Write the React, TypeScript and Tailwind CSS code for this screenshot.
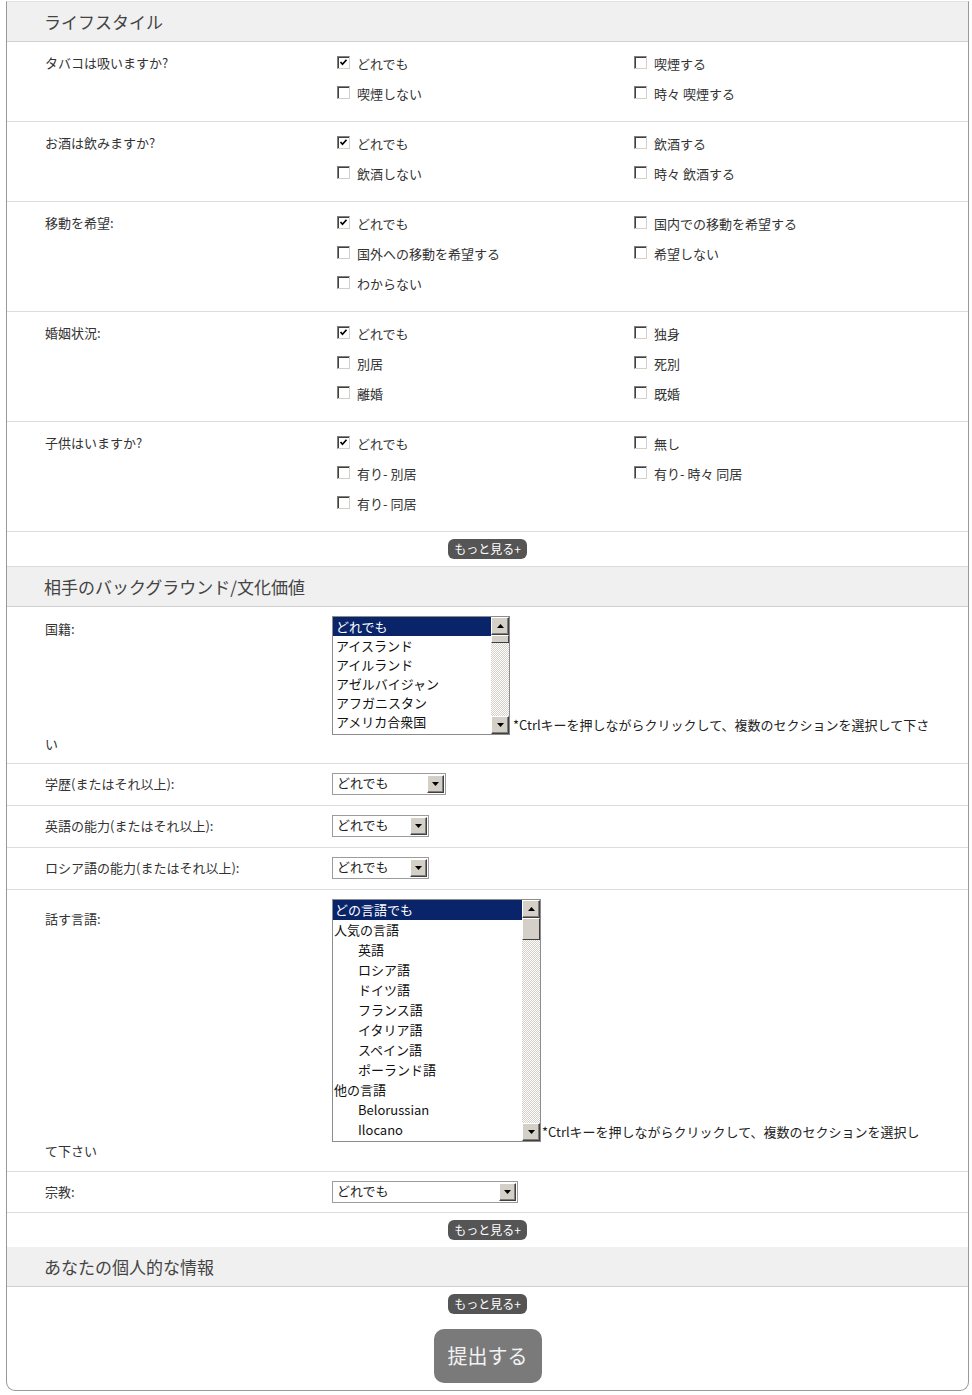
import React from "react";

const FONT = "font-['Noto_Sans_CJK_JP','Noto_Sans',sans-serif]";

function Check({ checked }: { checked?: boolean }) {
  return (
    <span className="mt-[2px] flex h-[13px] w-[13px] shrink-0 items-center justify-center border border-t-[#808080] border-l-[#808080] border-r-[#d4d0c8] border-b-[#d4d0c8] bg-white shadow-[inset_1px_1px_0_#404040]">
      {checked && (
        <svg width="9" height="9" viewBox="0 0 9 9">
          <path d="M1.5 4 L3.5 6.2 L7.5 1.8" fill="none" stroke="#000" strokeWidth="1.7" />
        </svg>
      )}
    </span>
  );
}

function Opt({ label, checked }: { label: string; checked?: boolean }) {
  return (
    <div className="flex h-[30px] items-start gap-[7px]">
      <Check checked={checked} />
      <span className="pt-[1px] leading-[18px] text-[13px] text-[#333]">{label}</span>
    </div>
  );
}

function Header({ title }: { title: string }) {
  return (
    <div className="flex h-[40px] items-center border-b border-[#d0d0d0] bg-[#f0f0f0] pl-[37px] text-[17px] text-[#444]">
      {title}
    </div>
  );
}

function CheckRow({
  label,
  left,
  right,
}: {
  label: string;
  left: { l: string; c?: boolean }[];
  right: { l: string; c?: boolean }[];
}) {
  return (
    <div className="flex border-b border-[#dcdcdc] pb-[7px] pl-[38px] pt-[12px]">
      <div className="w-[292px] text-[13px] leading-[18px] text-[#333]">{label}</div>
      <div className="w-[297px]">
        {left.map((o) => (
          <Opt key={o.l} label={o.l} checked={o.c} />
        ))}
      </div>
      <div>
        {right.map((o) => (
          <Opt key={o.l} label={o.l} checked={o.c} />
        ))}
      </div>
    </div>
  );
}

function Arrow({ up }: { up?: boolean }) {
  return (
    <svg width="7" height="4" viewBox="0 0 7 4">
      {up ? <path d="M3.5 0 L7 4 L0 4 Z" fill="#000" /> : <path d="M0 0 L7 0 L3.5 4 Z" fill="#000" />}
    </svg>
  );
}

function SBtn({ up, h }: { up?: boolean; h: string }) {
  return (
    <div
      className={`flex ${h} w-full items-center justify-center border border-t-white border-l-white border-r-[#404040] border-b-[#404040] bg-[#d4d0c8] shadow-[inset_-1px_-1px_0_#808080]`}
    >
      <Arrow up={up} />
    </div>
  );
}

function MoreBtn() {
  return (
    <div className="flex justify-center py-[7px]">
      <div className="flex h-[20px] w-[79px] items-center justify-center rounded-[6px] bg-[#555] text-[12px] text-white">
        もっと見る+
      </div>
    </div>
  );
}

function Select({ w, value }: { w: string; value: string }) {
  return (
    <div className={`flex h-[22px] ${w} items-stretch border border-[#9c9c9c] bg-white`}>
      <div className="flex-1 pl-[4px] text-[13px] leading-[18px] text-[#222]">{value}</div>
      <div className="m-[1px] w-[17px]">
        <SBtn h="h-full" />
      </div>
    </div>
  );
}

function SelectRow({ label, w }: { label: string; w: string }) {
  return (
    <div className="flex items-center border-b border-[#dcdcdc] pb-[10px] pl-[38px] pt-[9px]">
      <div className="w-[287px] text-[13px] text-[#333]">{label}</div>
      <Select w={w} value="どれでも" />
    </div>
  );
}

export default function App() {
  const countries = ["アイスランド", "アイルランド", "アゼルバイジャン", "アフガニスタン", "アメリカ合衆国"];
  const langs: { t: string; i?: boolean }[] = [
    { t: "人気の言語" },
    { t: "英語", i: true },
    { t: "ロシア語", i: true },
    { t: "ドイツ語", i: true },
    { t: "フランス語", i: true },
    { t: "イタリア語", i: true },
    { t: "スペイン語", i: true },
    { t: "ポーランド語", i: true },
    { t: "他の言語" },
    { t: "Belorussian", i: true },
    { t: "Ilocano", i: true },
  ];
  const checker =
    "bg-[repeating-conic-gradient(#d4d0c8_0%_25%,#ffffff_0%_50%)] bg-[length:2px_2px]";

  return (
    <div className={`${FONT} bg-white pb-[4px]`}>
      <div className="ml-[6px] mt-[1px] w-[963px] overflow-hidden rounded-b-[9px] border-x border-b border-t border-[#999] border-t-[#e2e2e2]">
        <Header title="ライフスタイル" />
        <CheckRow
          label="タバコは吸いますか?"
          left={[{ l: "どれでも", c: true }, { l: "喫煙しない" }]}
          right={[{ l: "喫煙する" }, { l: "時々 喫煙する" }]}
        />
        <CheckRow
          label="お酒は飲みますか?"
          left={[{ l: "どれでも", c: true }, { l: "飲酒しない" }]}
          right={[{ l: "飲酒する" }, { l: "時々 飲酒する" }]}
        />
        <CheckRow
          label="移動を希望:"
          left={[{ l: "どれでも", c: true }, { l: "国外への移動を希望する" }, { l: "わからない" }]}
          right={[{ l: "国内での移動を希望する" }, { l: "希望しない" }]}
        />
        <CheckRow
          label="婚姻状況:"
          left={[{ l: "どれでも", c: true }, { l: "別居" }, { l: "離婚" }]}
          right={[{ l: "独身" }, { l: "死別" }, { l: "既婚" }]}
        />
        <CheckRow
          label="子供はいますか?"
          left={[{ l: "どれでも", c: true }, { l: "有り- 別居" }, { l: "有り- 同居" }]}
          right={[{ l: "無し" }, { l: "有り- 時々 同居" }]}
        />
        <div className="border-b border-[#dcdcdc]">
          <MoreBtn />
        </div>

        <Header title="相手のバックグラウンド/文化価値" />
        {/* nationality */}
        <div className="border-b border-[#dcdcdc] pb-[10px] pl-[38px] pt-[9px] text-[13px] text-[#333]">
          <div className="flex items-end">
            <div className="w-[287px] self-start pt-[3px]">国籍:</div>
            <div className="flex h-[119px] w-[178px] border border-[#8c8c8c] bg-white">
              <div className="flex-1 overflow-hidden">
                <div className="h-[19px] bg-[#0a246a] pl-[3px] leading-[19px] text-white">どれでも</div>
                {countries.map((c) => (
                  <div key={c} className="h-[19px] pl-[3px] leading-[19px] text-[#111]">
                    {c}
                  </div>
                ))}
              </div>
              <div className={`flex w-[18px] flex-col ${checker}`}>
                <SBtn up h="h-[18px]" />
                <div className="h-[8px] border border-t-white border-l-white border-r-[#404040] border-b-[#404040] bg-[#d4d0c8]" />
                <div className="flex-1" />
                <SBtn h="h-[18px]" />
              </div>
            </div>
            <span className="mb-[1px] whitespace-nowrap pl-[3px] leading-[18px] text-[#222]">
              *Ctrlキーを押しながらクリックして、複数のセクションを選択して下さ
            </span>
          </div>
          <div className="leading-[18px]">い</div>
        </div>

        <SelectRow label="学歴(またはそれ以上):" w="w-[114px]" />
        <SelectRow label="英語の能力(またはそれ以上):" w="w-[97px]" />
        <SelectRow label="ロシア語の能力(またはそれ以上):" w="w-[97px]" />

        {/* languages */}
        <div className="border-b border-[#dcdcdc] pb-[11px] pl-[38px] pt-[9px] text-[13px] text-[#333]">
          <div className="flex items-end">
            <div className="w-[287px] self-start pt-[10px]">話す言語:</div>
            <div className="flex h-[243px] w-[209px] border border-[#8c8c8c] bg-white">
              <div className="flex-1 overflow-hidden">
                <div className="h-[20px] bg-[#0a246a] pl-[2px] leading-[20px] text-white">どの言語でも</div>
                {langs.map((l) => (
                  <div
                    key={l.t}
                    className={`h-[20px] leading-[20px] text-[#111] ${l.i ? "pl-[25px]" : "pl-[1px]"}`}
                  >
                    {l.t}
                  </div>
                ))}
              </div>
              <div className={`flex w-[18px] flex-col ${checker}`}>
                <SBtn up h="h-[18px]" />
                <div className="h-[22px] border border-t-white border-l-white border-r-[#404040] border-b-[#404040] bg-[#d4d0c8]" />
                <div className="flex-1" />
                <SBtn h="h-[18px]" />
              </div>
            </div>
            <span className="mb-[1px] whitespace-nowrap pl-[1px] leading-[18px] text-[#222]">
              *Ctrlキーを押しながらクリックして、複数のセクションを選択し
            </span>
          </div>
          <div className="leading-[18px]">て下さい</div>
        </div>

        <div className="flex items-center border-b border-[#dcdcdc] pb-[9px] pl-[38px] pt-[9px]">
          <div className="w-[287px] text-[13px] text-[#333]">宗教:</div>
          <Select w="w-[186px]" value="どれでも" />
        </div>
        <MoreBtn />

        <Header title="あなたの個人的な情報" />
        <MoreBtn />
        <div className="flex justify-center pb-[7px] pt-[8px]">
          <div className="flex h-[54px] w-[108px] items-center justify-center rounded-[10px] bg-[#7a7a7a] text-[20px] text-[#f2f2f2]">
            提出する
          </div>
        </div>
      </div>
    </div>
  );
}
